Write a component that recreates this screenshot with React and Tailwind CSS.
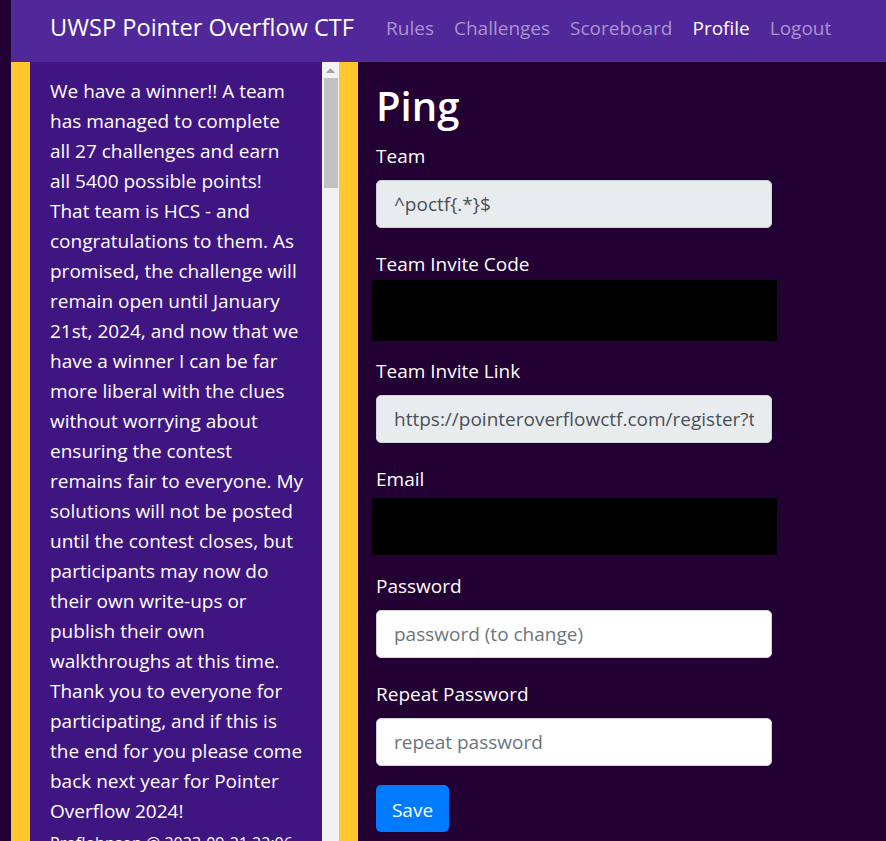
export default function App() {
  const lines = [
    'We have a winner!! A team',
    'has managed to complete',
    'all 27 challenges and earn',
    'all 5400 possible points!',
    'That team is HCS - and',
    'congratulations to them. As',
    'promised, the challenge will',
    'remain open until January',
    '21st, 2024, and now that we',
    'have a winner I can be far',
    'more liberal with the clues',
    'without worrying about',
    'ensuring the contest',
    'remains fair to everyone. My',
    'solutions will not be posted',
    'until the contest closes, but',
    'participants may now do',
    'their own write-ups or',
    'publish their own',
    'walkthroughs at this time.',
    'Thank you to everyone for',
    'participating, and if this is',
    'the end for you please come',
    'back next year for Pointer',
    'Overflow 2024!',
  ];

  const navLinks = ['Rules', 'Challenges', 'Scoreboard', 'Profile', 'Logout'];

  return (
    <div
      className="h-[841px] overflow-hidden bg-[#220033] pl-[11px] text-white"
      style={{ fontFamily: '"Open Sans", "Noto Sans", sans-serif' }}
    >
      <nav className="h-[62px] bg-[#51289a] flex items-center pl-[39px] pb-[6px]">
        <span className="text-[23.6px] mr-[32px] whitespace-nowrap">UWSP Pointer Overflow CTF</span>
        <div className="flex gap-[20px] text-[19px]">
          {navLinks.map((l) => (
            <span key={l} className={l === 'Profile' ? 'text-white' : 'text-[#a795cb]'}>
              {l}
            </span>
          ))}
        </div>
      </nav>

      <div className="flex h-[779px]">
        <div className="w-[19px] bg-[#ffc72c]" />
        <div className="w-[292px] bg-[#3f1582] pl-[20px] pt-[14px] overflow-hidden">
          <p className="text-[19px] leading-[30px] whitespace-nowrap">
            {lines.map((l, i) => (
              <span key={i} className="block">{l}</span>
            ))}
          </p>
          <p className="mt-[5px] text-[16px] whitespace-nowrap">ProfJohnson @ 2023-09-21 22:06</p>
        </div>
        <div className="w-[17px] bg-[#f1f1f1] flex flex-col items-center pt-[5px]">
          <svg width="9" height="6" viewBox="0 0 9 6">
            <path d="M0 6 L4.5 1 L9 6 Z" fill="#a3a3a3" />
          </svg>
          <div className="mt-[5px] w-[14px] h-[110px] bg-[#c1c1c1]" />
        </div>
        <div className="w-[19px] bg-[#ffc72c]" />

        <main className="flex-1 pl-[18px] pt-[20px]">
          <h1 className="text-[40px] leading-[48px] font-semibold mb-[11px]">Ping</h1>

          <label className="block text-[19px] leading-[30px] mb-[9px]">Team</label>
          <input
            disabled
            value="^poctf{.*}$"
            className="block w-[396px] h-[48px] rounded-[5px] border border-[#ced4da] bg-[#e9ecef] text-[#495057] text-[19px] pl-[17px] mb-[21px]"
          />

          <label className="block text-[19px] leading-[30px] mb-[1px]">Team Invite Code</label>
          <div className="-ml-[4px] w-[405px] h-[61px] bg-black mb-[15px]" />

          <label className="block text-[19px] leading-[30px] mb-[9px]">Team Invite Link</label>
          <input
            disabled
            value="https://pointeroverflowctf.com/register?team="
            className="block w-[396px] h-[48px] rounded-[5px] border border-[#ced4da] bg-[#e9ecef] text-[#495057] text-[19px] pl-[17px] pr-[17px] mb-[21px]"
          />

          <label className="block text-[19px] leading-[30px] mb-[4px]">Email</label>
          <div className="-ml-[4px] w-[405px] h-[57px] bg-black mb-[16px]" />

          <label className="block text-[19px] leading-[30px] mb-[9px]">Password</label>
          <input
            type="password"
            placeholder="password (to change)"
            className="block w-[396px] h-[48px] rounded-[5px] border border-[#ced4da] bg-white text-[19px] pl-[17px] mb-[21px] placeholder:text-[#6c757d] outline-none"
          />

          <label className="block text-[19px] leading-[30px] mb-[9px]">Repeat Password</label>
          <input
            type="password"
            placeholder="repeat password"
            className="block w-[396px] h-[48px] rounded-[5px] border border-[#ced4da] bg-white text-[19px] pl-[17px] mb-[19px] placeholder:text-[#6c757d] outline-none"
          />

          <button className="h-[47px] w-[73px] rounded-[5px] bg-[#007bff] text-white text-[19px] pt-[3px]">Save</button>
        </main>
      </div>
    </div>
  );
}
